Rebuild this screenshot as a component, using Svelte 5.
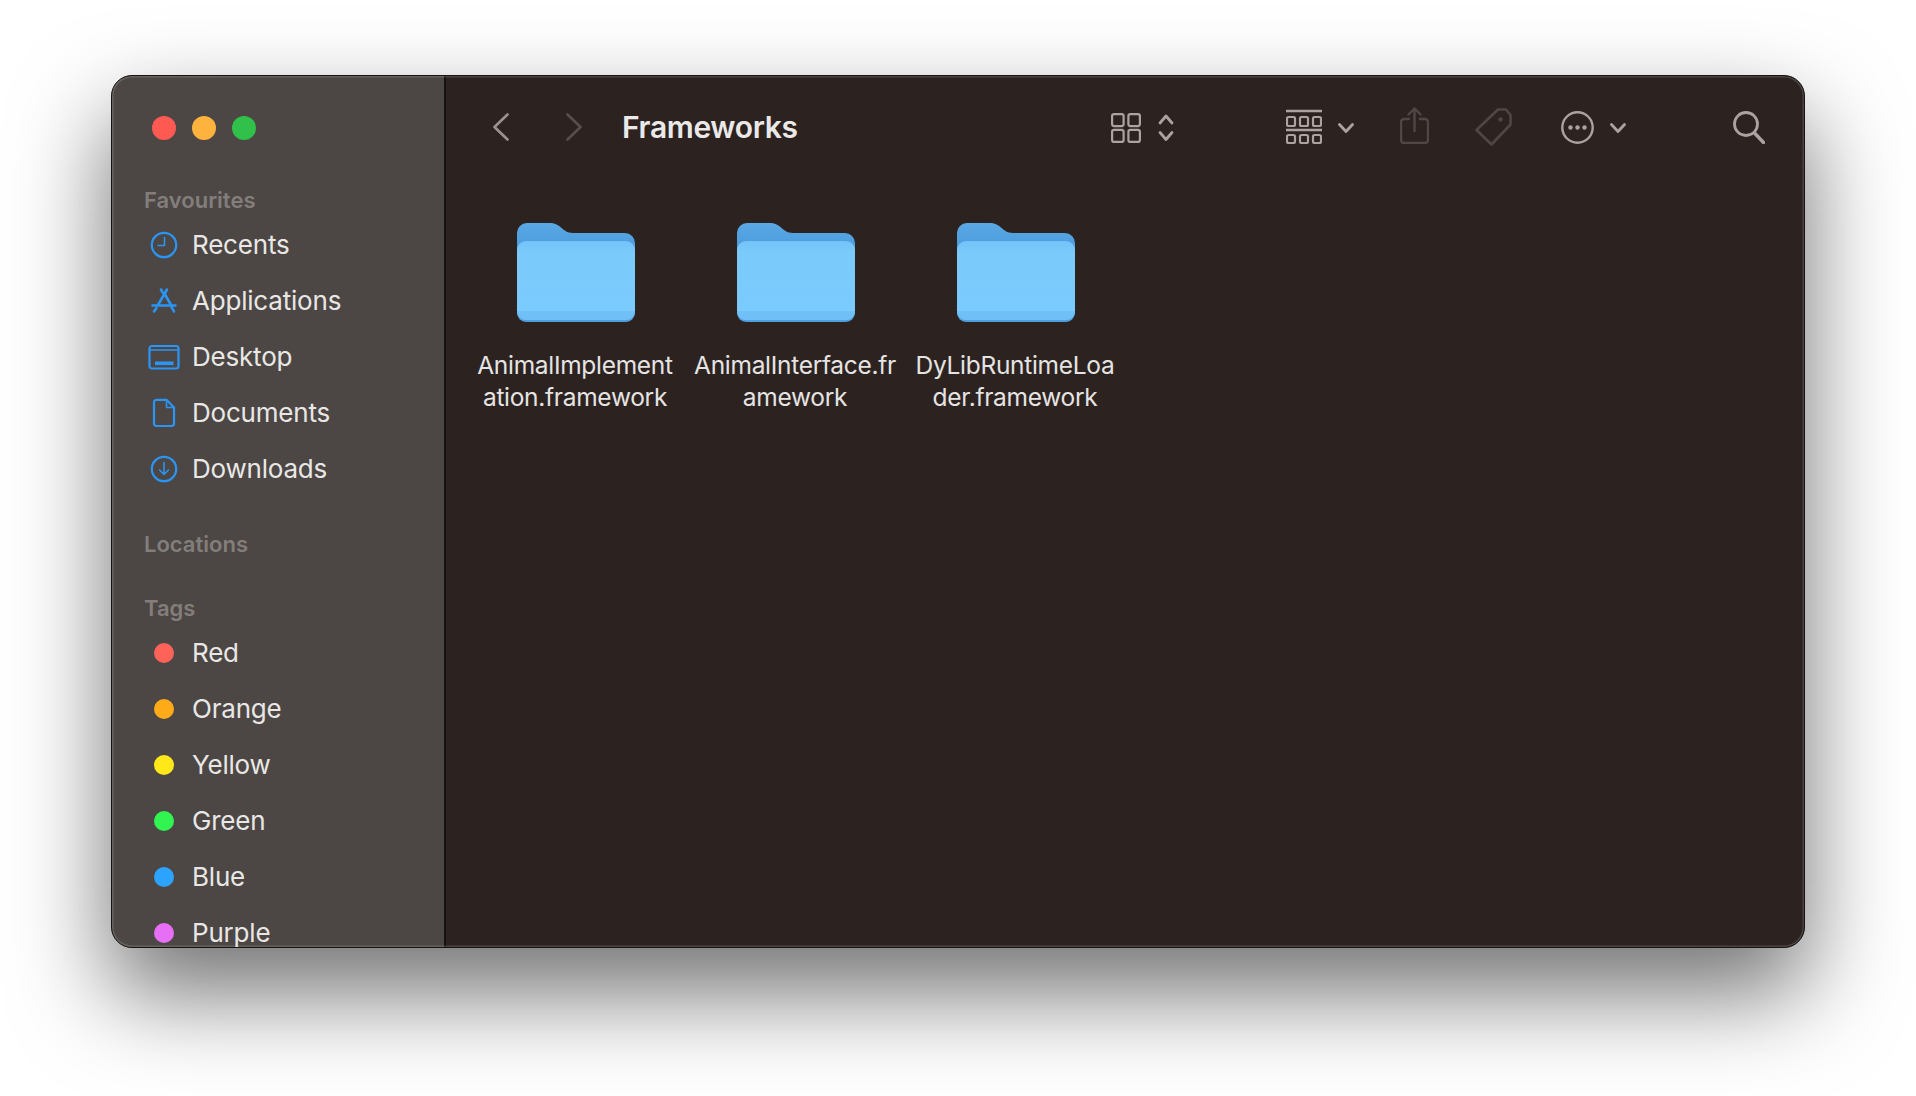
<script>
  const favourites = ['Recents', 'Applications', 'Desktop', 'Documents', 'Downloads']
  const tags = [
    { name: 'Red', color: '#ff6259' },
    { name: 'Orange', color: '#ffab19' },
    { name: 'Yellow', color: '#ffe81a' },
    { name: 'Green', color: '#32f450' },
    { name: 'Blue', color: '#2ba3ff' },
    { name: 'Purple', color: '#e76ff5' }
  ]
  const folders = [
    ['AnimalImplement', 'ation.framework'],
    ['AnimalInterface.fr', 'amework'],
    ['DyLibRuntimeLoa', 'der.framework']
  ]
</script>

<div class="page">
  <div class="window">
    <aside class="sidebar">
      <div class="lights">
        <span class="light red"></span>
        <span class="light yellow"></span>
        <span class="light green"></span>
      </div>

      <h3 class="heading first">Favourites</h3>
      {#each favourites as name}
        <div class="row">
          <span class="row-icon">
            <svg width="34" height="34" viewBox="0 0 34 34" fill="none" stroke="#2a95f5" stroke-width="2.2" stroke-linecap="round" stroke-linejoin="round">
              {#if name === 'Recents'}
                <circle cx="17" cy="17" r="12.2" />
                <path d="M17.5 9.5V17.5H11" stroke-width="1.6" />
              {:else if name === 'Applications'}
                <path d="M14 5.5l1.8 3.2M20 5.5L11 21M17.5 9.5l6.5 11.5M5.5 21.5H28.5M7 27.5l2.5-3.5M27 27.5L24 22" stroke-width="2.6" />
              {:else if name === 'Desktop'}
                <rect x="2.5" y="6" width="29" height="22.5" rx="2.5" />
                <path d="M3 10H31" stroke-width="1.4" />
                <rect x="8" y="21.5" width="18.5" height="3.6" fill="#2a95f5" stroke="none" />
              {:else if name === 'Documents'}
                <path d="M9.5 3.8H19.5L27 11.5V27.5A2.5 2.5 0 0 1 24.5 30H9.5A2.5 2.5 0 0 1 7 27.5V6.3A2.5 2.5 0 0 1 9.5 3.8Z" />
                <path d="M19.5 4V11.5H27" stroke-width="1.6" />
              {:else}
                <circle cx="17" cy="17" r="12.2" />
                <path d="M17 10.5V22.5M12.5 18L17 22.5L21.5 18" stroke-width="1.6" />
              {/if}
            </svg>
          </span>
          <span class="row-text">{name}</span>
        </div>
      {/each}

      <h3 class="heading locations">Locations</h3>
      <h3 class="heading tags">Tags</h3>
      {#each tags as tag}
        <div class="row">
          <span class="row-icon"><span class="dot" style:background={tag.color}></span></span>
          <span class="row-text">{tag.name}</span>
        </div>
      {/each}
    </aside>

    <main class="main">
      <header class="toolbar">
        <svg class="nav" width="16" height="28" viewBox="0 0 16 28" fill="none" stroke="#9b9290" stroke-width="2.6" stroke-linecap="round" stroke-linejoin="round"><path d="M14.5 1.5L1.5 14L14.5 26.5" /></svg>
        <svg class="nav forward" width="16" height="28" viewBox="0 0 16 28" fill="none" stroke="#574f4d" stroke-width="2.6" stroke-linecap="round" stroke-linejoin="round"><path d="M1.5 1.5L14.5 14L1.5 26.5" /></svg>
        <h1 class="title">Frameworks</h1>

        <div class="tools">
          <svg class="grid-icon" width="30" height="30" viewBox="0 0 30 30" fill="none" stroke="#aba3a1" stroke-width="2.2">
            <rect x="1.1" y="1.1" width="11.5" height="12" rx="2" />
            <rect x="17.4" y="1.1" width="11.5" height="12" rx="2" />
            <rect x="1.1" y="16.9" width="11.5" height="12" rx="2" />
            <rect x="17.4" y="16.9" width="11.5" height="12" rx="2" />
          </svg>
          <svg class="updown" width="16" height="28" viewBox="0 0 16 28" fill="none" stroke="#aba3a1" stroke-width="2.8" stroke-linecap="round" stroke-linejoin="round">
            <path d="M2 9L8 2L14 9M2 18.5L8 25.5L14 18.5" />
          </svg>
          <svg class="gallery" width="36" height="35" viewBox="0 0 36 35" fill="none" stroke="#aba3a1" stroke-width="2.2">
            <path d="M0 2H36M0 21H36" stroke-width="2.4" />
            <rect x="1" y="8" width="8" height="9" rx="1.5" />
            <rect x="14" y="8" width="8" height="9" rx="1.5" />
            <rect x="27" y="8" width="8" height="9" rx="1.5" />
            <rect x="1" y="26" width="8" height="8" rx="1.5" />
            <rect x="14" y="26" width="8" height="8" rx="1.5" />
            <rect x="27" y="26" width="8" height="8" rx="1.5" />
          </svg>
          <svg class="chevron" width="16" height="10" viewBox="0 0 16 10" fill="none" stroke="#aba3a1" stroke-width="2.8" stroke-linecap="round" stroke-linejoin="round"><path d="M1.5 1.5L8 8.5L14.5 1.5" /></svg>
          <svg class="share" width="29" height="37" viewBox="0 0 29 37" fill="none" stroke="#4f4745" stroke-width="2.4" stroke-linecap="round" stroke-linejoin="round">
            <path d="M9 12H4A3 3 0 0 0 1 15V33A3 3 0 0 0 4 36H25A3 3 0 0 0 28 33V15A3 3 0 0 0 25 12H20" />
            <path d="M14.5 24V1.5M8.5 7.5L14.5 1.5L20.5 7.5" />
          </svg>
          <svg class="tag" width="37" height="38" viewBox="0 0 37 38" fill="none" stroke="#4f4745" stroke-width="2.6" stroke-linejoin="round">
            <path d="M23 1.5H31L35.5 7V16.5L16.5 36.5L1.5 22Z" />
            <circle cx="25.5" cy="11.5" r="2.2" fill="#4f4745" stroke="none" />
          </svg>
          <svg class="more" width="33" height="33" viewBox="0 0 33 33" fill="none" stroke="#aba3a1" stroke-width="2.4">
            <circle cx="16.5" cy="16.5" r="15.2" />
            <circle cx="9.5" cy="16.5" r="2.2" fill="#aba3a1" stroke="none" />
            <circle cx="16.5" cy="16.5" r="2.2" fill="#aba3a1" stroke="none" />
            <circle cx="23.5" cy="16.5" r="2.2" fill="#aba3a1" stroke="none" />
          </svg>
          <svg class="chevron near" width="16" height="10" viewBox="0 0 16 10" fill="none" stroke="#aba3a1" stroke-width="2.8" stroke-linecap="round" stroke-linejoin="round"><path d="M1.5 1.5L8 8.5L14.5 1.5" /></svg>
          <svg class="search" width="32" height="33" viewBox="0 0 32 33" fill="none" stroke="#aba3a1" stroke-width="2.8" stroke-linecap="round">
            <circle cx="13" cy="13" r="11.5" />
            <path d="M21.5 22L30.5 31.5" stroke-width="3.4" />
          </svg>
        </div>
      </header>

      <section class="items">
        {#each folders as lines, i}
          <div class="item">
            <svg width="118" height="99" viewBox="0 0 118 99">
              <defs>
                <linearGradient id="front-{i}" x1="0" y1="0" x2="0" y2="1">
                  <stop offset="0" stop-color="#73c3f9" />
                  <stop offset="0.15" stop-color="#7bcafc" />
                  <stop offset="1" stop-color="#7acbfe" />
                </linearGradient>
                <linearGradient id="back-{i}" x1="0" y1="0" x2="0" y2="1">
                  <stop offset="0" stop-color="#5aa9e4" />
                  <stop offset="1" stop-color="#3f8dd6" />
                </linearGradient>
              </defs>
              <path d="M0 10A10 10 0 0 1 10 0H32C38 0 41 2 44 4.5C47 7 50 10 56 10H108A10 10 0 0 1 118 20V50H0Z" fill="url(#back-{i})" />
              <rect y="17" width="118" height="82" rx="9" fill="#4f9edd" />
              <path d="M0 27A9 9 0 0 1 9 18H109A9 9 0 0 1 118 27V88A9 9 0 0 1 109 97H9A9 9 0 0 1 0 88Z" fill="url(#front-{i})" />
              <path d="M0 88H118A9 9 0 0 1 109 97H9A9 9 0 0 1 0 88Z" fill="#70c0f7" />
            </svg>
            <div class="label">
              {#each lines as line}
                <span>{line}</span>
              {/each}
            </div>
          </div>
        {/each}
      </section>
    </main>
  </div>
</div>

<style>
  :global(body) {
    background: #fff;
  }

  .page {
    width: 1916px;
    height: 1096px;
    padding: 75px 0 0 111px;
    box-sizing: border-box;
    overflow: hidden;
    font-family: Inter, "Liberation Sans", sans-serif;
  }

  .window {
    position: relative;
    display: flex;
    box-sizing: border-box;
    width: 1694px;
    height: 873px;
    border: 1px solid #161312;
    border-radius: 21px;
    overflow: hidden;
    background: #2c2321;
    box-shadow: 0 44px 94px 2px rgba(0, 0, 0, 0.55);
  }

  /* light rim that sits over both panes */
  .window::after {
    content: '';
    position: absolute;
    inset: 0;
    border-radius: 20px;
    box-shadow: inset 0 0 0 1.5px rgba(255, 255, 255, 0.15);
    pointer-events: none;
  }

  .sidebar {
    flex: none;
    box-sizing: border-box;
    width: 334px;
    padding-top: 28px;
    border-right: 2px solid #141110;
    background: #4c4744;
    color: #e9e7e6;
    font-size: 26px;
    overflow: hidden;
  }

  .lights {
    display: flex;
    gap: 16px;
    height: 24px;
    padding: 12px 0 12px 40px;
  }

  .light {
    width: 24px;
    height: 24px;
    border-radius: 50%;
  }

  .red { background: #ff5a52; }
  .yellow { background: #fdb33d; }
  .green { background: #31c04a; }

  .heading {
    display: flex;
    align-items: center;
    height: 34px;
    margin: 0;
    padding-left: 32px;
    color: #837e7b;
    font-size: 22px;
    font-weight: 600;
  }

  .first { margin-top: 31px; }
  .locations { margin-top: 30px; }
  .tags { margin-top: 30px; }

  .row {
    display: flex;
    align-items: center;
    height: 56px;
  }

  .row-icon {
    display: flex;
    justify-content: center;
    align-items: center;
    flex: none;
    width: 34px;
    margin: 0 11px 0 35px;
  }

  .row-text {
    margin-top: -2px;
    letter-spacing: -0.2px;
  }

  .dot {
    width: 20px;
    height: 20px;
    border-radius: 50%;
  }

  .main {
    flex: 1;
    min-width: 0;
  }

  .toolbar {
    display: flex;
    align-items: center;
    height: 102px;
    padding: 0 39px 0 47px;
  }

  .forward { margin-left: 57px; }

  .title {
    flex: 1;
    margin: 0 0 0 40px;
    color: #ebe9e8;
    font-size: 30px;
    font-weight: 600;
    letter-spacing: -0.35px;
  }

  .tools {
    display: flex;
    align-items: center;
  }

  .grid-icon { margin-top: 2px; }
  .updown { margin-left: 17px; margin-top: 1px; }
  .gallery { margin-left: 112px; margin-bottom: 2px; }
  .chevron { margin-left: 16px; margin-top: 2px; }
  .share { margin-left: 46px; margin-bottom: 3px; }
  .tag { margin-left: 46px; }
  .more { margin-left: 49px; }
  .search { margin-left: 107px; }

  .items {
    display: flex;
    padding: 45px 0 0 20px;
  }

  .item {
    display: flex;
    flex-direction: column;
    align-items: center;
    width: 220px;
  }

  .label {
    display: flex;
    flex-direction: column;
    align-items: center;
    margin: 27px 2px 0 0;
    color: #e6e4e3;
    font-size: 24.5px;
    letter-spacing: -0.3px;
    line-height: 32px;
    white-space: nowrap;
  }
</style>
